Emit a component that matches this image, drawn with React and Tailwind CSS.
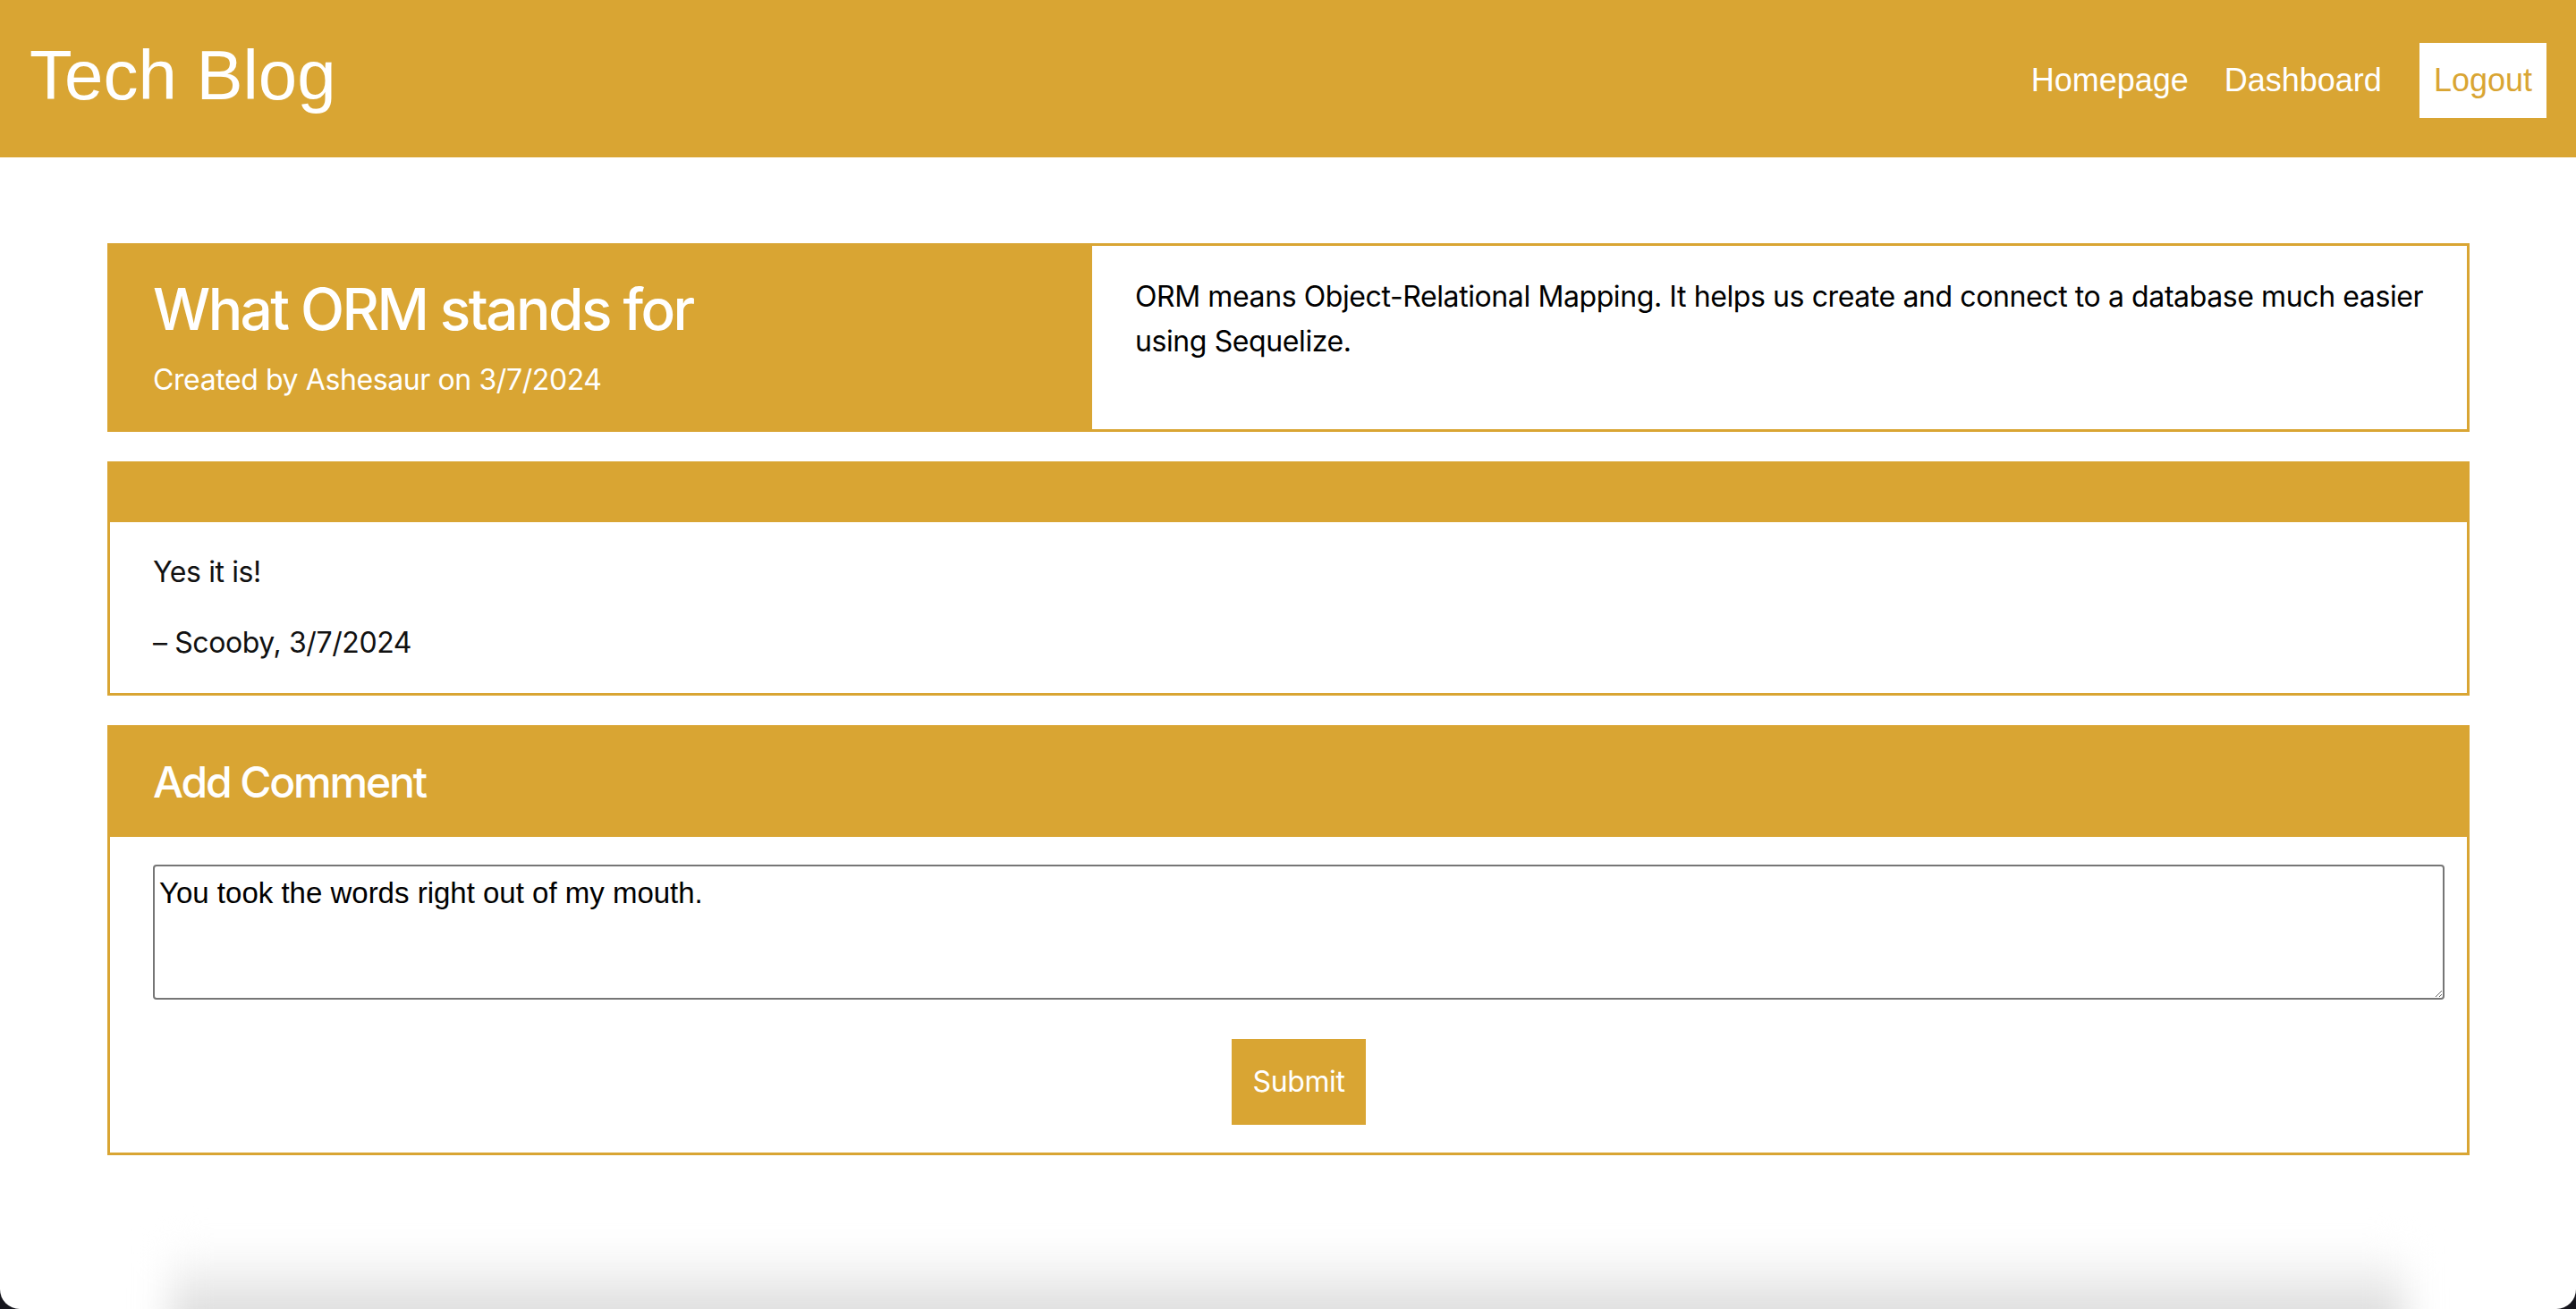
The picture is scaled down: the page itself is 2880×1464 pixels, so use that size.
import React from 'react';

const gold = 'bg-[#d9a533]';

const App = () => {
    return (
        <div className="h-[1464px] bg-[#16161d] overflow-hidden">
            <div className="h-full bg-white rounded-b-[22px] overflow-hidden flex flex-col font-['Inter',sans-serif] text-black">
                <header className={`${gold} h-[176px] flex items-center justify-between px-[33px] font-['Liberation_Sans',Arial,sans-serif] text-white`}>
                    <h1 className="text-[78px] leading-none -mt-[8px]">Tech Blog</h1>
                    <nav className="flex items-center text-[36px]">
                        <a className="mt-[4px]">Homepage</a>
                        <a className="ml-[40px] mt-[4px]">Dashboard</a>
                        <a className="ml-[42px] mt-[4px] h-[84px] px-[16px] bg-white text-[#d9a533] flex items-center">Logout</a>
                    </nav>
                </header>

                <main className="ml-[120px] mr-[119px] pt-[96px] flex flex-col gap-[33px] tracking-[-0.025em]">
                    <section className="border-[3px] border-[#d9a533] grid grid-cols-[1098px_1fr]">
                        <div className={`${gold} text-white pl-[48px] flex flex-col justify-center h-[205px]`}>
                            <h2 className="text-[64px] font-medium leading-[76px] tracking-[-0.04em] mt-[2px]">What ORM stands for</h2>
                            <p className="text-[32px] leading-[48px] mt-[17px]">Created by Ashesaur on 3/7/2024</p>
                        </div>
                        <div className="pl-[48px] pr-[40px] pt-[32px]">
                            <p className="text-[32px] leading-[50px]">ORM means Object-Relational Mapping. It helps us create and connect to a database much easier using Sequelize.</p>
                        </div>
                    </section>

                    <section className="border-[3px] border-[#d9a533]">
                        <div className={`${gold} h-[65px]`}></div>
                        <div className="pl-[48px] pt-[32px] pb-[32px] flex flex-col gap-[31px] text-[32px] leading-[48px] text-[#111]">
                            <p>Yes it is!</p>
                            <p>– Scooby, 3/7/2024</p>
                        </div>
                    </section>

                    <section className="border-[3px] border-[#d9a533]">
                        <div className={`${gold} h-[122px] flex items-center pl-[48px]`}>
                            <h3 className="text-[48px] font-medium tracking-[-0.045em] text-white">Add Comment</h3>
                        </div>
                        <div className="pl-[48px] pt-[31px] pb-[31px]">
                            <form className="w-[2562px] flex flex-col">
                                <textarea
                                    className="w-full h-[151px] border-2 border-[#767676] rounded-[4px] pt-[5px] pl-[5px] text-[33px] tracking-normal text-black font-['Liberation_Sans',Arial,sans-serif] outline-none"
                                    defaultValue="You took the words right out of my mouth."
                                />
                                <button type="button" className={`${gold} mt-[44px] mx-auto h-[96px] px-[24px] text-white text-[32px]`}>
                                    Submit
                                </button>
                            </form>
                        </div>
                    </section>
                </main>

                <div className="mt-auto mx-[190px] h-[110px] -mb-[40px] bg-linear-to-b from-white to-[#d0d0d0] blur-[20px]"></div>
            </div>
        </div>
    );
};

export default App;
